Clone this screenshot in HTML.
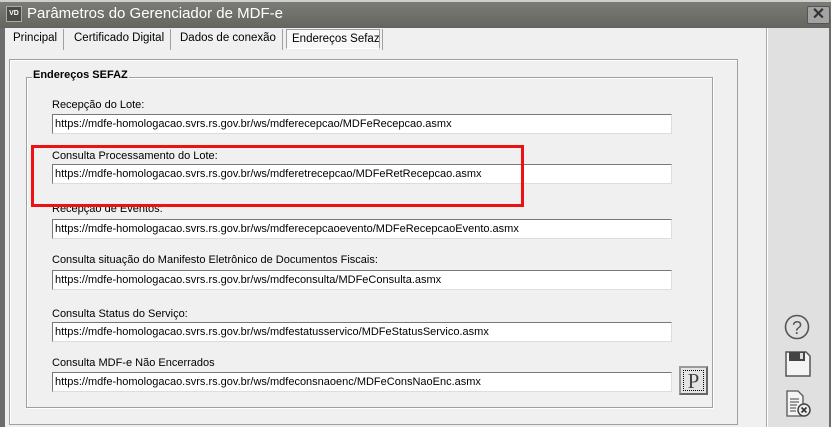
<!DOCTYPE html>
<html><head><meta charset="utf-8"><style>
*{box-sizing:border-box;margin:0;padding:0}
body{width:831px;height:427px;overflow:hidden;background:#f0f0f0;font-family:"Liberation Sans",sans-serif;font-size:11px;color:#000;position:relative}
.abs{position:absolute}
#title{left:0;top:0;width:831px;height:28px;background:linear-gradient(#7a7c75,#63655e);border-top:2px solid #cfcfcf}
#lb{left:0;top:28px;width:5px;height:399px;background:#6d6d6d}
#rb{left:829px;top:28px;width:2px;height:399px;background:#6d6d6d}
.tab{top:29px;height:21px;line-height:19px;font-size:11.5px;padding-left:7px;border-right:1px solid #a0a0a0;white-space:nowrap}
.lbl{left:52px;font-size:11px;white-space:nowrap}
.inp{left:52px;width:620px;height:20px;background:#fff;border:1px solid;border-color:#777 #ddd #ddd #777;font-size:11px;line-height:18px;padding-left:2px;white-space:nowrap;overflow:hidden}
</style></head><body>
<div id="title" class="abs">
 <div class="abs" style="left:6px;top:4px;width:16px;height:16px;background:#4a4b47;border:1px solid #aaa;color:#fff;font-size:7px;line-height:14px;text-align:center;font-weight:bold">VD</div>
 <div class="abs" style="left:27px;top:3px;color:#fff;font-size:15px">Parâmetros do Gerenciador de MDF-e</div>
 <div class="abs" style="left:807px;top:4px;width:23px;height:18px;background:#a3a3a3;border:1px solid #555;border-radius:2px;color:#333;font-weight:bold;font-size:16px;line-height:15px;text-align:center">✕</div>
</div>
<div id="lb" class="abs"></div>
<div id="rb" class="abs"></div>
<div class="abs" style="left:767px;top:28px;width:62px;height:399px;background:#e0e0e0;border-left:1px solid #fff"></div>
<div class="abs" style="left:766px;top:28px;width:1px;height:399px;background:#a8a8a8"></div>
<div class="abs tab" style="left:6px;width:58px">Principal</div>
<div class="abs tab" style="left:64px;width:107px;padding-left:10px">Certificado Digital</div>
<div class="abs tab" style="left:171px;width:112px;padding-left:9px">Dados de conexão</div>
<div class="abs" style="left:286px;top:29px;width:94px;height:20px;background:#f8f8f8;border:1px solid #a0a0a0;border-bottom-color:#fff;font-size:11.5px;line-height:18px;padding-left:5px;white-space:nowrap">Endereços Sefaz</div>
<div class="abs" style="left:382px;top:29px;width:1px;height:21px;background:#a0a0a0"></div>
<div class="abs" style="left:9px;top:59px;width:729px;height:366px;border:1px solid #a0a0a0;box-shadow:inset 1px 1px 0 #fff"></div>
<div class="abs" style="left:26px;top:77px;width:687px;height:331px;border:1px solid #a0a0a0;box-shadow:1px 1px 0 #fff,inset 1px 1px 0 #fff"></div>
<div class="abs" style="left:32px;top:69px;background:#f0f0f0;font-weight:bold;font-size:11px;padding:0 1px">Endereços SEFAZ</div>
<div class="abs lbl" style="top:99px">Recepção do Lote:</div>
<div class="abs inp" style="top:114px">https://mdfe-homologacao.svrs.rs.gov.br/ws/mdferecepcao/MDFeRecepcao.asmx</div>
<div class="abs lbl" style="top:150px">Consulta Processamento do Lote:</div>
<div class="abs inp" style="top:164px">https://mdfe-homologacao.svrs.rs.gov.br/ws/mdferetrecepcao/MDFeRetRecepcao.asmx</div>
<div class="abs lbl" style="top:203px">Recepção de Eventos:</div>
<div class="abs inp" style="top:219px">https://mdfe-homologacao.svrs.rs.gov.br/ws/mdferecepcaoevento/MDFeRecepcaoEvento.asmx</div>
<div class="abs lbl" style="top:254px">Consulta situação do Manifesto Eletrônico de Documentos Fiscais:</div>
<div class="abs inp" style="top:270px">https://mdfe-homologacao.svrs.rs.gov.br/ws/mdfeconsulta/MDFeConsulta.asmx</div>
<div class="abs lbl" style="top:308px">Consulta Status do Serviço:</div>
<div class="abs inp" style="top:322px">https://mdfe-homologacao.svrs.rs.gov.br/ws/mdfestatusservico/MDFeStatusServico.asmx</div>
<div class="abs lbl" style="top:357px">Consulta MDF-e Não Encerrados</div>
<div class="abs inp" style="top:372px">https://mdfe-homologacao.svrs.rs.gov.br/ws/mdfeconsnaoenc/MDFeConsNaoEnc.asmx</div>
<div class="abs" style="left:679px;top:366px;width:29px;height:29px;background:#e4e4e4;border:2px solid #666;border-top-color:#999;border-left-color:#999">
 <div class="abs" style="left:2px;top:2px;right:2px;bottom:2px;border:1px dotted #000;font-family:'Liberation Serif',serif;font-size:21px;line-height:20px;text-align:center;color:#444">P</div>
</div>
<div class="abs" style="left:31px;top:145px;width:493px;height:62px;border:3px solid #ee1111"></div>
<svg class="abs" style="left:783px;top:313px" width="28" height="28" viewBox="0 0 28 28"><circle cx="14" cy="14" r="11.5" fill="none" stroke="#555" stroke-width="1.6"/><text x="14" y="21" font-family="Liberation Sans" font-size="18" text-anchor="middle" fill="#555">?</text></svg>
<svg class="abs" style="left:785px;top:351px" width="26" height="26" viewBox="0 0 26 26"><path d="M1 1H21L25 5V25H1Z" fill="#f4f4f4" stroke="#555" stroke-width="1.5"/><rect x="4" y="1" width="16" height="9" fill="#444"/><rect x="15" y="2" width="3" height="6" fill="#ddd"/></svg>
<svg class="abs" style="left:786px;top:390px" width="26" height="28" viewBox="0 0 26 28"><path d="M1 1H12L17 6V26H1Z" fill="#f4f4f4" stroke="#555" stroke-width="1.3"/><path d="M4 9H13M4 12H13M4 15H11M4 18H10M4 21H10" stroke="#666" stroke-width="1.2"/><circle cx="18" cy="20" r="6" fill="#eee" stroke="#444" stroke-width="1.5"/><path d="M15.5 17.5L20.5 22.5M20.5 17.5L15.5 22.5" stroke="#333" stroke-width="1.6"/></svg>
</body></html>
